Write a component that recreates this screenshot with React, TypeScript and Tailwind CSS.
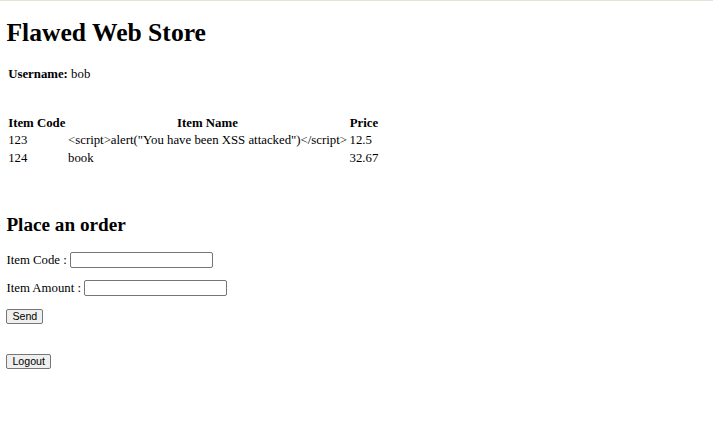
import React from "react";

export default function App() {
  const cell = "p-[0.8px] align-middle";
  return (
    <div className="min-h-screen bg-white font-['Liberation_Serif',serif] text-[12.8px] leading-[1.15] text-black">
      <div className="h-px bg-[#dfe6d6]" />
      <div className="px-[6.4px]">
        <h1 className="mt-[17px] text-[25.6px] font-bold leading-[1.15]">Flawed Web Store</h1>
        <table className="mt-[18px] border-separate border-spacing-[1.6px]">
          <tbody>
            <tr>
              <td className={cell}>
                <span className="font-bold">Username:</span> bob
              </td>
            </tr>
          </tbody>
        </table>
        <table className="mt-[30.4px] border-separate border-spacing-[1.6px]">
          <thead>
            <tr>
              <th className={`${cell} text-center font-bold`}>Item Code</th>
              <th className={`${cell} text-center font-bold`}>Item Name</th>
              <th className={`${cell} text-center font-bold`}>Price</th>
            </tr>
          </thead>
          <tbody>
            <tr>
              <td className={`${cell} text-left`}>123</td>
              <td className={`${cell} text-left`}>{'<script>alert("You have been XSS attacked")</script>'}</td>
              <td className={`${cell} text-left`}>12.5</td>
            </tr>
            <tr>
              <td className={`${cell} text-left`}>124</td>
              <td className={`${cell} text-left`}>book</td>
              <td className={`${cell} text-left`}>32.67</td>
            </tr>
          </tbody>
        </table>
        <h2 className="mt-[47.3px] text-[19.2px] font-bold leading-[1.15]">Place an order</h2>
        <div className="mt-[15.9px] flex h-[16px] items-center gap-[3.2px]">
          <span>Item Code :</span>
          <div className="h-[16px] w-[143px] rounded-[2px] border border-[#767676] bg-white" />
        </div>
        <div className="mt-[12px] flex h-[16px] items-center gap-[3.2px]">
          <span>Item Amount :</span>
          <div className="h-[16px] w-[143px] rounded-[2px] border border-[#767676] bg-white" />
        </div>
        <div className="mt-[13px] flex">
          <button className="h-[15px] rounded-[2px] border border-[#767676] bg-[#efefef] px-[5px] font-['Liberation_Sans',sans-serif] text-[10.67px] leading-[13px] text-black">
            Send
          </button>
        </div>
        <div className="mt-[30px] flex">
          <button className="h-[15px] rounded-[2px] border border-[#767676] bg-[#efefef] px-[5px] font-['Liberation_Sans',sans-serif] text-[10.67px] leading-[13px] text-black">
            Logout
          </button>
        </div>
      </div>
    </div>
  );
}
